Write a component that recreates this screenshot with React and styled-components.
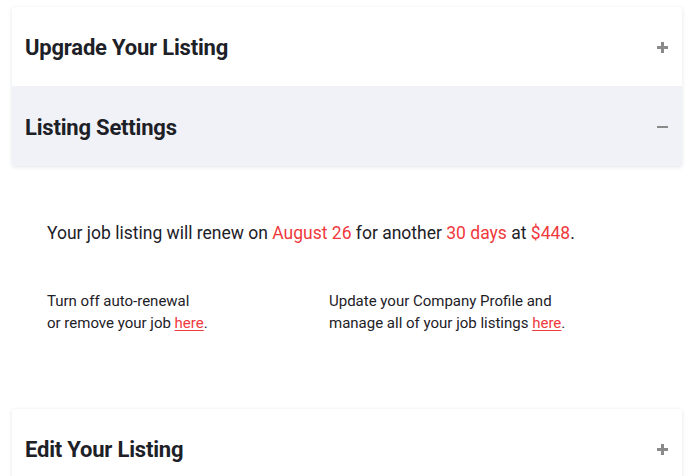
import React from "react";
import styled, { createGlobalStyle } from "styled-components";

const Global = createGlobalStyle`
  html, body { margin: 0; padding: 0; background: #fff; }
  body { font-family: Roboto, "Liberation Sans", sans-serif; color: #1d2127; }
`;

const Page = styled.div`
  padding: 7px 6px 0 12px;
  display: flex;
  flex-direction: column;
`;

const Card = styled.div`
  background: #fff;
  border-radius: 3px;
  box-shadow: 0 1px 4px rgba(20, 30, 60, 0.12);
  overflow: hidden;
`;

const Header = styled.div`
  display: flex;
  align-items: center;
  justify-content: space-between;
  box-sizing: border-box;
  height: ${(p) => (p.$first ? 79 : 80)}px;
  padding: 2px 14px 0 13px;
  background: ${(p) => (p.$active ? "#f1f2f7" : "#fff")};
`;

const Title = styled.h2`
  margin: 0;
  font-size: 22px;
  font-weight: 700;
  letter-spacing: -0.2px;
  color: #1d2127;
`;

const Toggle = styled.span`
  width: 11px;
  height: 11px;
  position: relative;
  &::before, &::after {
    content: "";
    position: absolute;
    background: #8a8a8a;
  }
  &::before { left: 0; top: 4px; width: 11px; height: 2.5px; }
  &::after {
    display: ${(p) => (p.$open ? "none" : "block")};
    left: 4.25px; top: 0; width: 2.5px; height: 11px;
  }
`;

const Body = styled.div`
  padding: 55px 35px 75px;
  display: flex;
  flex-direction: column;
  gap: 45px;
`;

const Lead = styled.p`
  margin: 0;
  font-size: 17.5px;
  line-height: 24px;
`;

const Accent = styled.span`
  color: #f0393d;
`;

const Columns = styled.div`
  display: grid;
  grid-template-columns: 282px 1fr;
`;

const Note = styled.p`
  margin: 0;
  font-size: 15px;
  line-height: 22px;
`;

const Link = styled.a`
  color: #f0393d;
  text-decoration: underline;
  text-underline-offset: 2px;
`;

export default function App() {
  return (
    <>
      <Global />
      <Page>
        <Card>
          <Header $first>
            <Title>Upgrade Your Listing</Title>
            <Toggle />
          </Header>
          <Header $active>
            <Title>Listing Settings</Title>
            <Toggle $open />
          </Header>
        </Card>
        <Body>
          <Lead>
            Your job listing will renew on <Accent>August 26</Accent> for another{" "}
            <Accent>30 days</Accent> at <Accent>$448</Accent>.
          </Lead>
          <Columns>
            <Note>
              Turn off auto-renewal
              <br />
              or remove your job <Link href="#">here</Link>.
            </Note>
            <Note>
              Update your Company Profile and
              <br />
              manage all of your job listings <Link href="#">here</Link>.
            </Note>
          </Columns>
        </Body>
        <Card>
          <Header $first>
            <Title>Edit Your Listing</Title>
            <Toggle />
          </Header>
        </Card>
      </Page>
    </>
  );
}
